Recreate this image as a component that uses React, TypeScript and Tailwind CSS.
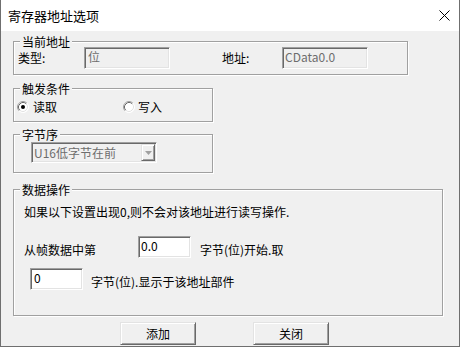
import React from "react";

function Radio({ checked }: { checked?: boolean }) {
  return (
    <svg width="12" height="12" viewBox="0 0 12 12" className="shrink-0">
      <circle cx="6" cy="6" r="5.5" fill="#fff" />
      <path d="M 2.11 9.89 A 5.5 5.5 0 0 1 9.89 2.11" stroke="#a0a0a0" fill="none" />
      <path d="M 9.89 2.11 A 5.5 5.5 0 0 1 2.11 9.89" stroke="#ffffff" fill="none" />
      <path d="M 2.82 9.18 A 4.5 4.5 0 0 1 9.18 2.82" stroke="#696969" fill="none" />
      <path d="M 9.18 2.82 A 4.5 4.5 0 0 1 2.82 9.18" stroke="#e3e3e3" fill="none" />
      {checked && <circle cx="6" cy="6" r="2" fill="#000" />}
    </svg>
  );
}

export default function App() {
  return (
    <div className="w-[460px] h-[347px] bg-[#f0f0f0] border-x border-b border-[#6f6f6f] font-['Noto_Sans_CJK_SC','Microsoft_YaHei',sans-serif] text-[12px] text-black overflow-hidden">
      {/* title bar */}
      <div className="h-[31px] bg-white flex items-center justify-between pl-[7px] pr-[9px]">
        <span className="text-[13px] leading-[16px]">寄存器地址选项</span>
        <svg width="11" height="11" viewBox="0 0 11 11">
          <path d="M0.5 0.5 L10.5 10.5 M10.5 0.5 L0.5 10.5" stroke="#000" strokeWidth="1" />
        </svg>
      </div>

      <div className="flex flex-col pl-[12px]">
        {/* 当前地址 */}
        <fieldset className="mt-[3px] w-[395px] border border-[#a0a0a0] shadow-[1px_1px_0_#fff,inset_1px_1px_0_#fff]">
          <legend className="ml-[6px] px-[2px] leading-[15px] bg-[#f0f0f0]">当前地址</legend>
          <div className="flex items-center mt-[-2px] pb-[5px] pl-[4px]">
            <span className="w-[66px] leading-[14px]">类型:</span>
            <div className="w-[86px] h-[22px] border border-t-[#a0a0a0] border-l-[#a0a0a0] border-b-white border-r-white shadow-[inset_1px_1px_0_#696969,inset_-1px_-1px_0_#e3e3e3] bg-[#f0f0f0] text-[#6d6d6d] pl-[3px] pt-[2px] leading-[14px]">
              位
            </div>
            <span className="ml-[52px] w-[60px] leading-[14px]">地址:</span>
            <div className="w-[86px] h-[22px] border border-t-[#a0a0a0] border-l-[#a0a0a0] border-b-white border-r-white shadow-[inset_1px_1px_0_#696969,inset_-1px_-1px_0_#e3e3e3] bg-[#f0f0f0] text-[#6d6d6d] pl-[2px] pt-[2px] leading-[14px]">
              CData0.0
            </div>
          </div>
        </fieldset>

        {/* 触发条件 */}
        <fieldset className="mt-[6px] w-[200px] border border-[#a0a0a0] shadow-[1px_1px_0_#fff,inset_1px_1px_0_#fff]">
          <legend className="ml-[6px] px-[2px] leading-[15px] bg-[#f0f0f0]">触发条件</legend>
          <div className="flex items-center h-[14px] mt-[4px] mb-[7px] pl-[3px]">
            <div className="w-[106px] flex items-center">
              <Radio checked />
              <span className="ml-[4px] leading-[14px]">读取</span>
            </div>
            <div className="flex items-center">
              <Radio />
              <span className="ml-[3px] leading-[14px]">写入</span>
            </div>
          </div>
        </fieldset>

        {/* 字节序 */}
        <fieldset className="mt-[5px] w-[200px] border border-[#a0a0a0] shadow-[1px_1px_0_#fff,inset_1px_1px_0_#fff]">
          <legend className="ml-[6px] px-[2px] leading-[15px] bg-[#f0f0f0]">字节序</legend>
          <div className="pl-[17px] pb-[9px]">
            <div className="w-[126px] h-[21px] flex items-stretch p-[1px] border border-t-[#a0a0a0] border-l-[#a0a0a0] border-b-white border-r-white shadow-[inset_1px_1px_0_#696969,inset_-1px_-1px_0_#e3e3e3] bg-[#f0f0f0]">
              <span className="flex-1 text-[#6d6d6d] pl-[1px] leading-[17px]">U16低字节在前</span>
              <div className="w-[14px] flex items-center justify-center bg-[#f0f0f0] border border-t-[#e3e3e3] border-l-[#e3e3e3] border-b-[#696969] border-r-[#696969] shadow-[inset_1px_1px_0_#fff,inset_-1px_-1px_0_#a0a0a0]">
                <svg width="7" height="4" viewBox="0 0 7 4">
                  <path d="M0 0 L7 0 L3.5 4 Z" fill="#a0a0a0" />
                </svg>
              </div>
            </div>
          </div>
        </fieldset>

        {/* 数据操作 */}
        <fieldset className="mt-[9px] w-[430px] border border-[#a0a0a0] shadow-[1px_1px_0_#fff,inset_1px_1px_0_#fff]">
          <legend className="ml-[6px] px-[2px] leading-[15px] bg-[#f0f0f0]">数据操作</legend>
          <div className="flex flex-col pl-[10px] pb-[25px]">
            <div className="mt-[8px] leading-[14px]">如果以下设置出现0,则不会对该地址进行读写操作.</div>
            <div className="flex items-start mt-[17px]">
              <span className="w-[114px] mt-[7px] leading-[14px]">从帧数据中第</span>
              <div className="w-[53px] h-[22px] border border-t-[#a0a0a0] border-l-[#a0a0a0] border-b-white border-r-white shadow-[inset_1px_1px_0_#696969,inset_-1px_-1px_0_#e3e3e3] bg-white pl-[2px] pt-[2px] leading-[14px]">
                0.0
              </div>
              <span className="ml-[9px] mt-[7px] leading-[14px]">字节(位)开始.取</span>
            </div>
            <div className="flex items-start mt-[10px]">
              <div className="ml-[6px] w-[53px] h-[22px] border border-t-[#a0a0a0] border-l-[#a0a0a0] border-b-white border-r-white shadow-[inset_1px_1px_0_#696969,inset_-1px_-1px_0_#e3e3e3] bg-white pl-[3px] pt-[2px] leading-[14px]">
                0
              </div>
              <span className="ml-[8px] mt-[7px] leading-[14px]">字节(位).显示于该地址部件</span>
            </div>
          </div>
        </fieldset>

        {/* buttons */}
        <div className="flex mt-[6px] ml-[107px]">
          <button className="w-[76px] h-[23px] bg-[#f0f0f0] border border-t-[#e3e3e3] border-l-[#e3e3e3] border-b-[#696969] border-r-[#696969] shadow-[inset_1px_1px_0_#fff,inset_-1px_-1px_0_#a0a0a0] leading-[14px]">
            添加
          </button>
          <button className="ml-[57px] w-[76px] h-[23px] bg-[#f0f0f0] border border-t-[#e3e3e3] border-l-[#e3e3e3] border-b-[#696969] border-r-[#696969] shadow-[inset_1px_1px_0_#fff,inset_-1px_-1px_0_#a0a0a0] leading-[14px]">
            关闭
          </button>
        </div>
      </div>
    </div>
  );
}
